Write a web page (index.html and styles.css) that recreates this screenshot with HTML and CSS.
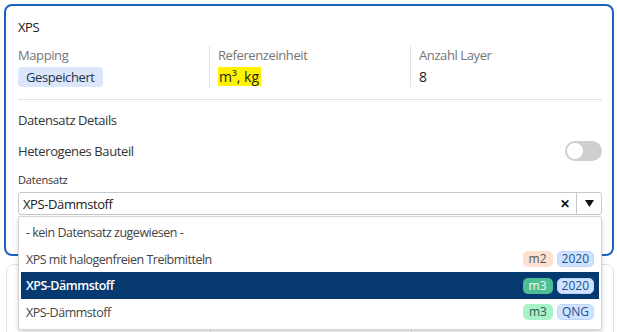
FILE: index.html
```html
<!DOCTYPE html>
<html lang="de">
<head>
    <meta charset="UTF-8">
    <meta name="viewport" content="width=device-width, initial-scale=1.0">
    <title>XPS Datensatz</title>
    <link rel="stylesheet" href="styles.css">
</head>
<body>
    <div class="card card-active">
        <div class="card-title">XPS</div>

        <div class="stats">
            <div class="stat">
                <div class="stat-label">Mapping</div>
                <span class="status-badge">Gespeichert</span>
            </div>
            <div class="stat">
                <div class="stat-label">Referenzeinheit</div>
                <div class="stat-value"><mark class="highlight">m³, kg</mark></div>
            </div>
            <div class="stat">
                <div class="stat-label">Anzahl Layer</div>
                <div class="stat-value">8</div>
            </div>
        </div>

        <div class="section-title">Datensatz Details</div>

        <div class="switch-row">
            <span>Heterogenes Bauteil</span>
            <span class="switch"><span class="switch-knob"></span></span>
        </div>

        <div class="field">
            <label class="field-label">Datensatz</label>
            <div class="select">
                <span class="select-value">XPS-Dämmstoff</span>
                <span class="select-clear">&#x2715;</span>
                <span class="select-arrow">
                    <svg width="9" height="7" viewBox="0 0 9 7"><path d="M0 0 H9 L4.5 7 Z" fill="#111"/></svg>
                </span>
            </div>

            <ul class="menu">
                <li class="menu-item">- kein Datensatz zugewiesen -</li>
                <li class="menu-item">
                    <span>XPS mit halogenfreien Treibmitteln</span>
                    <span class="tags"><span class="tag tag-m2">m2</span><span class="tag tag-year">2020</span></span>
                </li>
                <li class="menu-item selected">
                    <span>XPS-Dämmstoff</span>
                    <span class="tags"><span class="tag tag-m3-strong">m3</span><span class="tag tag-year">2020</span></span>
                </li>
                <li class="menu-item">
                    <span>XPS-Dämmstoff</span>
                    <span class="tags"><span class="tag tag-m3">m3</span><span class="tag tag-year">QNG</span></span>
                </li>
            </ul>
        </div>
    </div>

    <div class="card card-next">
        <div class="stats">
            <div class="stat"></div>
            <div class="stat"></div>
            <div class="stat"></div>
        </div>
    </div>
</body>
</html>
```

FILE: styles.css
```css
html,
body {
    height: 332px;
    overflow: hidden;
}

body {
    margin: 0;
    padding: 4px 3px 0 4px;
    box-sizing: border-box;
    font-family: "Open Sans", "Noto Sans", sans-serif;
    font-size: 13px;
    letter-spacing: -0.4px;
    color: #333;
    background: #fff;
}

.card {
    background: white;
    border-radius: 8px;
}

.card-active {
    border: 2px solid #1b61bd;
    padding: 12px 10px 39px 12px;
}

.card-next {
    margin: 8px 0 0 2px;
    border: 1px solid #e2e2e2;
    padding: 41px 10px 0 12px;
}

.card-title {
    line-height: 18px;
    color: #222;
}

.stats {
    display: grid;
    grid-template-columns: 191px 201px 1fr;
    margin-top: 10px;
    padding-bottom: 12px;
    border-bottom: 1px solid #e3e3e3;
}

.card-next .stats {
    margin-top: 0;
    padding-bottom: 0;
    border-bottom: none;
    height: 42px;
}

.stat + .stat {
    border-left: 1px solid #e3e3e3;
    padding-left: 8px;
}

.stat-label {
    color: #757575;
    line-height: 18px;
    margin-bottom: 3px;
}

.stat-value {
    font-size: 14px;
    letter-spacing: 0;
    line-height: 20px;
    color: #222;
}

.highlight {
    background: #fff200;
    color: #222;
    padding: 0 2px 0 1px;
}

.status-badge {
    display: inline-block;
    background: #dbe6fb;
    color: #24324a;
    border-radius: 4px;
    padding: 1px 8px;
    line-height: 18px;
}

.section-title {
    margin-top: 11px;
    line-height: 18px;
}

.switch-row {
    display: flex;
    justify-content: space-between;
    align-items: center;
    margin-top: 12px;
}

.switch {
    width: 37px;
    height: 20px;
    border-radius: 10px;
    background: #cfcfcf;
    display: flex;
    align-items: center;
    padding: 0 2px;
    box-sizing: border-box;
}

.switch-knob {
    width: 16px;
    height: 16px;
    border-radius: 50%;
    background: white;
}

.field {
    position: relative;
    margin-top: 12px;
}

.field-label {
    display: block;
    font-size: 11px;
    letter-spacing: -0.2px;
    line-height: 14px;
    margin-bottom: 5px;
    color: #333;
}

.select {
    display: flex;
    align-items: center;
    height: 23px;
    border: 1px solid #c8c8c8;
    border-radius: 3px;
    box-sizing: border-box;
}

.select-value {
    flex: 1;
    padding-left: 4px;
    color: #222;
}

.select-clear {
    font-size: 12px;
    font-weight: bold;
    color: #111;
    padding: 0 6px;
}

.select-arrow {
    display: flex;
    align-items: center;
    justify-content: center;
    width: 24px;
    height: 100%;
    border-left: 1px solid #c8c8c8;
}

.menu {
    position: absolute;
    top: 43px;
    left: 0;
    right: 0;
    margin: 0;
    padding: 2px 2px 3px;
    list-style: none;
    background: white;
    border: 1px solid #d6d6d6;
    border-radius: 2px;
    box-shadow: 0 2px 4px rgba(0, 0, 0, 0.18);
    z-index: 10;
}

.menu-item {
    display: flex;
    justify-content: space-between;
    align-items: center;
    height: 26.7px;
    padding: 0 5px;
    font-size: 12.5px;
    letter-spacing: -0.5px;
    color: #444;
}

.menu-item.selected {
    background: #083a72;
    color: white;
    font-weight: 600;
}

.tags {
    display: flex;
    gap: 4px;
    font-weight: normal;
    letter-spacing: 0;
}

.tag {
    display: inline-block;
    line-height: 16px;
    padding: 0 6px;
    border-radius: 5px;
    font-size: 12px;
}

.tag-m2 {
    background: #fde0cf;
    color: #555;
}

.tag-year {
    background: #cfe2ff;
    color: #1d4f8c;
    border: 1px solid #bcd6fb;
    line-height: 14px;
    padding: 0 4px;
}

.tag-m3-strong {
    background: #4dbf94;
    color: #eafff5;
}

.tag-m3 {
    background: #a6f2c9;
    color: #2f5d48;
}
```
